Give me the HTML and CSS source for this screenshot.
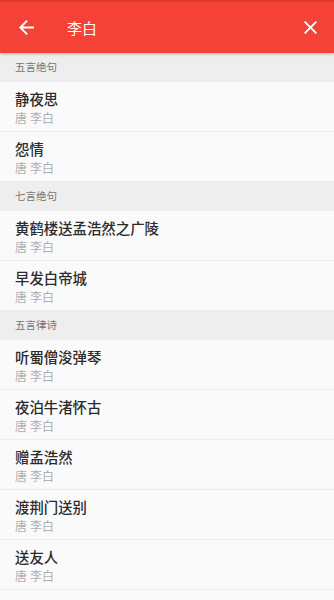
FILE: index.html
```html
<!DOCTYPE html>
<html lang="zh">
<head>
<meta charset="utf-8">
<link rel="stylesheet" href="styles.css">
</head>
<body>
<div class="app">
  <header class="bar">
    <svg class="back" width="15" height="15" viewBox="4 4 16 16"><path d="M20 11H7.83l5.59-5.59L12 4l-8 8 8 8 1.41-1.41L7.83 13H20v-2z" fill="#fff"/></svg>
    <div class="title">李白</div>
    <svg class="close" width="13" height="13" viewBox="5 5 14 14"><path d="M19 6.41L17.59 5 12 10.59 6.41 5 5 6.41 10.59 12 5 17.59 6.41 19 12 13.41 17.59 19 19 17.59 13.41 12z" fill="#fff"/></svg>
  </header>
  <main class="list">
    <div class="section">五言绝句</div>
    <div class="item"><div class="name">静夜思</div><div class="sub">唐 李白</div></div>
    <div class="item"><div class="name">怨情</div><div class="sub">唐 李白</div></div>
    <div class="section">七言绝句</div>
    <div class="item"><div class="name">黄鹤楼送孟浩然之广陵</div><div class="sub">唐 李白</div></div>
    <div class="item"><div class="name">早发白帝城</div><div class="sub">唐 李白</div></div>
    <div class="section">五言律诗</div>
    <div class="item"><div class="name">听蜀僧浚弹琴</div><div class="sub">唐 李白</div></div>
    <div class="item"><div class="name">夜泊牛渚怀古</div><div class="sub">唐 李白</div></div>
    <div class="item"><div class="name">赠孟浩然</div><div class="sub">唐 李白</div></div>
    <div class="item"><div class="name">渡荆门送别</div><div class="sub">唐 李白</div></div>
    <div class="item"><div class="name">送友人</div><div class="sub">唐 李白</div></div>
  </main>
</div>
</body>
</html>
```

FILE: styles.css
```css
* { box-sizing: border-box; }
html, body { margin: 0; padding: 0; }
body {
  width: 334px;
  height: 600px;
  overflow: hidden;
  background: #fafafa;
  font-family: Roboto, "Noto Sans CJK SC", "Noto Sans", sans-serif;
}
.app { display: flex; flex-direction: column; }
.bar {
  position: relative;
  z-index: 2;
  height: 53px;
  background: #f44336;
  border-top: 2px solid #dc3a2f;
  display: flex;
  align-items: center;
  padding-left: 19px;
  padding-right: 16px;
  box-shadow: 0 1px 3px rgba(0,0,0,0.25);
}
.back { display: block; margin-top: -1px; }
.title {
  margin-left: 33px;
  color: #fff;
  font-size: 15px;
  flex: 1;
  margin-top: -1px;
}
.close { display: block; margin-top: -1px; margin-right: 1px; }
.list { display: flex; flex-direction: column; }
.section {
  height: 29px;
  background: #eeeeee;
  color: #757575;
  font-size: 10.5px;
  line-height: 28px;
  padding: 1px 0 0 15px;
}
.item {
  height: 50px;
  padding: 10px 0 0 15px;
  border-bottom: 1px solid #ececec;
  background: #fafafa;
}
.name {
  font-size: 14.4px;
  line-height: 18px;
  color: #2b2b2b;
  font-weight: 500;
}
.sub {
  margin-top: 1px;
  font-size: 12px;
  line-height: 17px;
  color: #b0b0b0;
}
```
